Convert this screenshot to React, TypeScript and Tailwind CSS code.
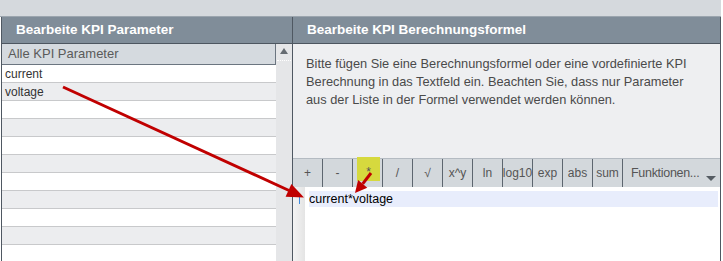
import React from "react";

const ops = ["+", "-", "*", "/", "√", "x^y", "ln", "log10", "exp", "abs", "sum"];
const rows = ["current", "voltage", "", "", "", "", "", "", "", "", ""];

function Arrows() {
  return (
    <svg className="absolute inset-0 pointer-events-none" width="723" height="261" viewBox="0 0 723 261">
      <line x1="63" y1="87" x2="289" y2="190.5" stroke="#c00000" strokeWidth="3" />
      <polygon points="304,197.5 285.6,196.7 291.4,183.9" fill="#c00000" />
      <line x1="371" y1="173" x2="362.7" y2="183.8" stroke="#c00000" strokeWidth="3" />
      <polygon points="355,193 367.3,187.7 358.1,179.9" fill="#c00000" />
    </svg>
  );
}

export default function App() {
  return (
    <div
      className="relative w-[723px] h-[261px] overflow-hidden bg-white"
      style={{ fontFamily: '"Liberation Sans", Arial, sans-serif' }}
    >
      {/* Top bar */}
      <div className="h-[17px] w-[721px] bg-[#d5d9dd] border-b border-[#9ba5ae]" />

      <div className="flex h-[244px] w-[721px]">
        {/* Left panel */}
        <div className="flex flex-col w-[292px] ml-px border-l border-r border-[#4f5862]">
          <div className="h-[27px] shrink-0 flex items-center pl-[14px] bg-[#808d99] border-b border-[#4d5660] text-white font-bold text-[13.5px]">
            Bearbeite KPI Parameter
          </div>
          <div className="flex flex-1 min-h-0">
            <div className="flex-1 flex flex-col overflow-hidden">
              <div className="h-[21px] shrink-0 flex items-center pl-[6px] bg-[#d5dadf] border-b border-r border-[#6b7580] text-[13px] text-[#5a5a5a]">
                Alle KPI Parameter
              </div>
              {rows.map((r, i) => (
                <div
                  key={i}
                  className={`h-[18px] shrink-0 flex items-center pl-[3px] border-b border-[#c8c9cb] text-[12px] text-[#333] ${
                    i % 2 === 0 ? "bg-white" : "bg-[#ecedef]"
                  }`}
                >
                  {r}
                </div>
              ))}
            </div>
            {/* Scrollbar */}
            <div className="w-[16px] shrink-0 bg-[#e5e6e8] flex flex-col items-center">
              <div className="mt-[4px] w-0 h-0 border-l-[4px] border-r-[4px] border-b-[6px] border-l-transparent border-r-transparent border-b-[#666c72]" />
              <div className="mt-[6px] w-[14px] border-t border-dotted border-white" />
            </div>
          </div>
        </div>

        {/* Right panel */}
        <div className="flex-1 flex flex-col border-r border-[#4f5862]">
          <div className="h-[27px] shrink-0 flex items-center pl-[14px] bg-[#808d99] border-b border-[#4d5660] text-white font-bold text-[13.5px]">
            Bearbeite KPI Berechnungsformel
          </div>
          <div className="h-[114px] shrink-0 bg-[#eeeff1] pl-[13px] pt-[11px] text-[12.8px] leading-[18px] text-[#4a4a4a]">
            <div className="w-[395px]">
              Bitte fügen Sie eine Berechnungsformel oder eine vordefinierte KPI Berechnung in das Textfeld ein. Beachten Sie, dass nur Parameter aus der Liste in der Formel verwendet werden können.
            </div>
          </div>
          {/* Toolbar */}
          <div className="h-[29px] shrink-0 flex bg-[#d3d8dc] border-t border-[#b4bbc2] text-[12px] text-[#555]">
            {ops.map((o) => (
              <div key={o} className="w-[30px] shrink-0 border-r border-[#5d666f] flex items-center justify-center relative">
                {o === "*" ? (
                  <div className="absolute left-[4px] top-[-2px] w-[23px] h-[24px] bg-[#d6d93e] flex justify-center pt-[6px]">
                    *
                  </div>
                ) : (
                  o
                )}
              </div>
            ))}
            <div className="flex-1 flex items-center pl-[8px] pr-[4px] justify-between">
              <span className="text-[12.5px] tracking-[-0.3px]">Funktionen...</span>
              <div className="mt-[10px] w-0 h-0 border-l-[5px] border-r-[5px] border-t-[5px] border-l-transparent border-r-transparent border-t-[#555c63]" />
            </div>
          </div>
          {/* Editor */}
          <div className="flex-1 flex bg-white">
            <div className="w-[12px] shrink-0 bg-gradient-to-r from-[#f4f4f4] to-[#e4e4e4] flex justify-center">
              <div className="mt-[8px] w-px h-[9px] bg-[#3d8be0]" />
            </div>
            <div className="flex-1 pt-[4px] pl-[4px] pr-[2px]">
              <div className="h-[16px] bg-[#e8edfc] flex items-center text-[12.5px] text-black">
                current*voltage
              </div>
            </div>
          </div>
        </div>
      </div>

      <Arrows />
    </div>
  );
}
